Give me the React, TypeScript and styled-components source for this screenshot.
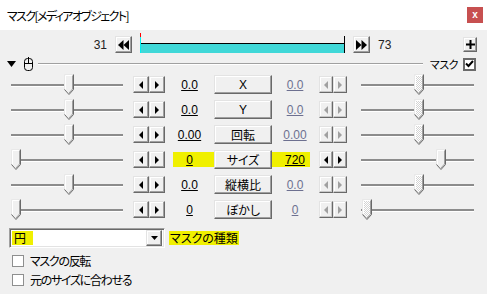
import styled, { createGlobalStyle } from "styled-components";

const GlobalStyle = createGlobalStyle`
  html, body { margin: 0; padding: 0; }
  body {
    width: 487px;
    height: 294px;
    overflow: hidden;
    background: #f0f0f0;
    color: #000;
    font-family: "Liberation Sans", "Noto Sans CJK JP", sans-serif;
    font-size: 12px;
    font-feature-settings: "palt";
  }
`;

const Window = styled.div`
  width: 487px;
  height: 294px;
  display: flex;
  flex-direction: column;
`;

const TitleBar = styled.div`
  height: 30px;
  flex: none;
  background: #fff;
  display: flex;
  align-items: center;
  justify-content: space-between;
  padding: 0 4px 0 7px;
`;

const Title = styled.span`
  font-family: "Noto Sans CJK JP", sans-serif;
  font-size: 12px;
  letter-spacing: -1.6px;
`;

const CloseBox = styled.div`
  width: 16px;
  height: 16px;
  background: #c75050;
  color: #fff;
  font-size: 10px;
  font-weight: bold;
  display: flex;
  align-items: center;
  justify-content: center;
  line-height: 1;
`;

const Body = styled.div`
  flex: 1;
  display: flex;
  flex-direction: column;
`;

const Bevel = styled.div<{ $w: number; $h: number; $off?: boolean }>`
  box-sizing: border-box;
  width: ${(p) => p.$w}px;
  height: ${(p) => p.$h}px;
  flex: none;
  background: #f0f0f0;
  border: 1px solid;
  border-color: #e3e3e3 #696969 #696969 #e3e3e3;
  box-shadow: inset -1px -1px ${(p) => (p.$off ? "#c8c8c8" : "#a0a0a0")}, inset 1px 1px #fff;
  display: flex;
  align-items: center;
  justify-content: center;
  color: ${(p) => (p.$off ? "#a0a0a0" : "#000")};
`;

/* timeline */
const TimelineRow = styled.div`
  display: flex;
  align-items: center;
  height: 17px;
  margin-top: 6px;
`;

const FrameNo = styled.div<{ $w?: number }>`
  width: ${(p) => (p.$w ? `${p.$w}px` : "auto")};
  text-align: right;
  font-size: 12px;
  color: #222;
`;

const Gap = styled.div<{ $w: number }>`
  width: ${(p) => p.$w}px;
  flex: none;
`;

const Spacer = styled.div`
  flex: 1;
`;

const Bar = styled.div`
  position: relative;
  box-sizing: border-box;
  width: 205px;
  height: 17px;
  flex: none;
  display: flex;
  flex-direction: column;
  justify-content: flex-end;
  border-left: 1px solid #00f0f0;
  border-right: 1px solid #000;
  &::before {
    content: "";
    position: absolute;
    left: -1px;
    top: -3px;
    width: 1px;
    height: 4px;
    background: #ff0000;
  }
`;

const BarFill = styled.div`
  height: 9px;
  background: #40d8d8;
  border-top: 1px solid #000;
`;

/* header */
const HeaderRow = styled.div`
  display: flex;
  align-items: center;
  height: 14px;
  margin-top: 4px;
  padding: 0 11px 0 7px;
`;

const Rule = styled.div`
  flex: 1;
  height: 1px;
  background: #a0a0a0;
  border-bottom: 1px solid #fff;
  margin: 0 4px;
`;

const SmallLabel = styled.span`
  font-size: 11px;
  font-family: "Noto Sans CJK JP", sans-serif;
  letter-spacing: -0.5px;
  margin: 0 5px 0 3px;
`;

const DarkCheck = styled.div`
  box-sizing: border-box;
  width: 13px;
  height: 13px;
  border: 2px solid #6a6a6a;
  background: #fff;
  display: flex;
  align-items: center;
  justify-content: center;
`;

/* parameter rows */
const Rows = styled.div`
  margin-top: 1px;
`;

const Row = styled.div`
  display: flex;
  align-items: center;
  height: 25px;
  padding-left: 11px;
`;

const Slider = styled.div<{ $w: number }>`
  position: relative;
  width: ${(p) => p.$w}px;
  height: 22px;
  flex: none;
  display: flex;
  flex-direction: column;
`;

const Track = styled.div`
  margin-top: 10px;
  height: 2px;
  background: #8c8c8c;
  border-bottom: 1px solid #fff;
`;

const ThumbBox = styled.div<{ $x: number }>`
  position: absolute;
  top: 0;
  left: ${(p) => p.$x}px;
  width: 11px;
  height: 22px;
`;

const SpinPair = styled.div`
  display: flex;
  flex: none;
`;

const Center = styled.div<{ $mark?: boolean }>`
  display: flex;
  align-items: center;
  height: 15px;
  width: 137px;
  flex: none;
  background: ${(p) => (p.$mark ? "#f0f000" : "transparent")};
`;

const Value = styled.div<{ $w: number; $off?: boolean }>`
  width: ${(p) => p.$w}px;
  flex: none;
  text-align: center;
  font-size: 12px;
  text-decoration: underline;
  color: ${(p) => (p.$off ? "#6d7090" : "#000")};
`;

const NameButton = styled(Bevel)`
  font-size: 12px;
  font-family: "Liberation Sans", "Noto Sans CJK JP", sans-serif;
`;

/* bottom part */
const ComboRow = styled.div`
  display: flex;
  align-items: center;
  margin-top: 6px;
  padding-left: 9px;
  height: 20px;
`;

const Combo = styled.div`
  box-sizing: border-box;
  width: 156px;
  height: 20px;
  background: #fff;
  border: 1px solid;
  border-color: #a0a0a0 #fff #fff #a0a0a0;
  box-shadow: inset 1px 1px #696969, inset -1px -1px #e3e3e3;
  display: flex;
  align-items: center;
  justify-content: space-between;
  padding: 0 2px 0 2px;
`;

const Mark = styled.span`
  background: #f0f000;
  font-family: "Noto Sans CJK JP", sans-serif;
  font-size: 12px;
  line-height: 14px;
  padding: 0 2px;
`;

const ComboText = styled(Mark)`
  width: 17px;
  padding: 0 2px;
`;

const TypeLabel = styled(Mark)`
  margin-left: 4px;
  padding: 0 1px;
`;

const CheckRow = styled.div`
  display: flex;
  align-items: center;
  height: 13px;
  padding-left: 12px;
  margin-top: 6px;
  font-family: "Noto Sans CJK JP", sans-serif;
  font-size: 12px;
  letter-spacing: -1.3px;
`;

const Box = styled.div`
  box-sizing: border-box;
  width: 12px;
  height: 12px;
  border: 1px solid #8e8f8f;
  background: #fff;
  margin-right: 6px;
  flex: none;
`;

const Arrow = ({ dir, off }: { dir: "l" | "r" | "d"; off?: boolean }) => {
  const c = off ? "#a0a0a0" : "#000";
  if (dir === "d")
    return (
      <svg width="7" height="4" viewBox="0 0 7 4">
        <polygon points="0,0 7,0 3.5,4" fill={c} />
      </svg>
    );
  return (
    <svg width="4" height="8" viewBox="0 0 4 8">
      <polygon points={dir === "l" ? "4,0 4,8 0,4" : "0,0 0,8 4,4"} fill={c} />
    </svg>
  );
};

const Spin = ({ off, w }: { off?: boolean; w: number }) => (
  <SpinPair>
    <Bevel $w={w} $h={17} $off={off}>
      <Arrow dir="l" off={off} />
    </Bevel>
    <Bevel $w={w} $h={17} $off={off}>
      <Arrow dir="r" off={off} />
    </Bevel>
  </SpinPair>
);

const Thumb = ({ x, off }: { x: number; off?: boolean }) => (
  <ThumbBox $x={x}>
    <svg width="11" height="22" viewBox="0 0 11 22">
      <defs>
        <pattern id="hatch" width="2" height="2" patternUnits="userSpaceOnUse">
          <rect width="2" height="2" fill="#fff" />
          <rect width="1" height="1" fill="#d4d4d4" />
          <rect x="1" y="1" width="1" height="1" fill="#d4d4d4" />
        </pattern>
      </defs>
      <polygon points="0.5,0.5 9.5,0.5 9.5,15.5 5,20.5 0.5,15.5" fill={off ? "url(#hatch)" : "#f0f0f0"} />
      <polyline points="0.5,15.5 0.5,0.5 9.5,0.5" fill="none" stroke="#e8e8e8" />
      <polyline points="1.5,15 1.5,1.5 8.5,1.5" fill="none" stroke="#fff" />
      <polyline points="9.5,0.5 9.5,15.5 5,20.5 0.5,15.5" fill="none" stroke="#696969" />
      <polyline points="8.5,1.5 8.5,15 5,19" fill="none" stroke="#a0a0a0" />
    </svg>
  </ThumbBox>
);

const Skip = ({ dir }: { dir: "l" | "r" }) => (
  <Bevel $w={17} $h={17}>
    <svg width="11" height="10" viewBox="0 0 11 10">
      {dir === "l" ? (
        <>
          <polygon points="5.5,0 5.5,10 0,5" fill="#000" />
          <polygon points="11,0 11,10 5.5,5" fill="#000" />
        </>
      ) : (
        <>
          <polygon points="0,0 0,10 5.5,5" fill="#000" />
          <polygon points="5.5,0 5.5,10 11,5" fill="#000" />
        </>
      )}
    </svg>
  </Bevel>
);

const rows = [
  { name: "X", l: "0.0", r: "0.0", lp: 53, rp: 53 },
  { name: "Y", l: "0.0", r: "0.0", lp: 53, rp: 53 },
  { name: "回転", l: "0.00", r: "0.00", lp: 53, rp: 53 },
  { name: "サイズ", l: "0", r: "720", lp: 0, rp: 75, mark: true },
  { name: "縦横比", l: "0.0", r: "0.0", lp: 53, rp: 53 },
  { name: "ぼかし", l: "0", r: "0", lp: 0, rp: 1 },
];

export default function App() {
  return (
    <>
      <GlobalStyle />
      <Window>
        <TitleBar>
          <Title>マスク[メディアオブジェクト]</Title>
          <CloseBox>x</CloseBox>
        </TitleBar>
        <Body>
          <TimelineRow>
            <FrameNo $w={107}>31</FrameNo>
            <Gap $w={8} />
            <Skip dir="l" />
            <Gap $w={8} />
            <Bar>
              <BarFill />
            </Bar>
            <Gap $w={8} />
            <Skip dir="r" />
            <Gap $w={8} />
            <FrameNo>73</FrameNo>
            <Spacer />
            <Bevel $w={14} $h={15}>
              <svg width="9" height="9" viewBox="0 0 9 9">
                <rect x="3.5" y="0" width="2" height="9" fill="#000" />
                <rect x="0" y="3.5" width="9" height="2" fill="#000" />
              </svg>
            </Bevel>
            <Gap $w={10} />
          </TimelineRow>

          <HeaderRow>
            <svg width="9" height="6" viewBox="0 0 9 6">
              <polygon points="0,0 9,0 4.5,6" fill="#000" />
            </svg>
            <Gap $w={8} />
            <svg width="10" height="14" viewBox="0 0 10 14">
              <rect x="0.5" y="1.5" width="8" height="12" rx="3" fill="none" stroke="#000" />
              <line x1="4.5" y1="0" x2="4.5" y2="6" stroke="#000" />
              <line x1="0.5" y1="6.5" x2="8.5" y2="6.5" stroke="#000" />
            </svg>
            <Rule />
            <SmallLabel>マスク</SmallLabel>
            <DarkCheck>
              <svg width="9" height="8" viewBox="0 0 9 8">
                <polyline points="1,3.5 3.5,6 8,1" fill="none" stroke="#000" strokeWidth="2" />
              </svg>
            </DarkCheck>
          </HeaderRow>

          <Rows>
            {rows.map((r) => {
              const off = !r.mark;
              return (
                <Row key={r.name}>
                  <Slider $w={112}>
                    <Track />
                    <Thumb x={r.lp} />
                  </Slider>
                  <Gap $w={10} />
                  <Spin w={16} />
                  <Gap $w={8} />
                  <Center $mark={r.mark}>
                    <Value $w={33}>{r.l}</Value>
                    <Gap $w={8} />
                    <NameButton $w={58} $h={19}>
                      {r.name}
                    </NameButton>
                    <Gap $w={8} />
                    <Value $w={30} $off={off}>
                      {r.r}
                    </Value>
                  </Center>
                  <Gap $w={9} />
                  <Spin w={14} off={off} />
                  <Gap $w={14} />
                  <Slider $w={113}>
                    <Track />
                    <Thumb x={r.rp} off={off} />
                  </Slider>
                </Row>
              );
            })}
          </Rows>

          <ComboRow>
            <Combo>
              <ComboText>円</ComboText>
              <Bevel $w={16} $h={16}>
                <Arrow dir="d" />
              </Bevel>
            </Combo>
            <TypeLabel>マスクの種類</TypeLabel>
          </ComboRow>

          <CheckRow>
            <Box />
            マスクの反転
          </CheckRow>
          <CheckRow>
            <Box />
            元のサイズに合わせる
          </CheckRow>
        </Body>
      </Window>
    </>
  );
}
